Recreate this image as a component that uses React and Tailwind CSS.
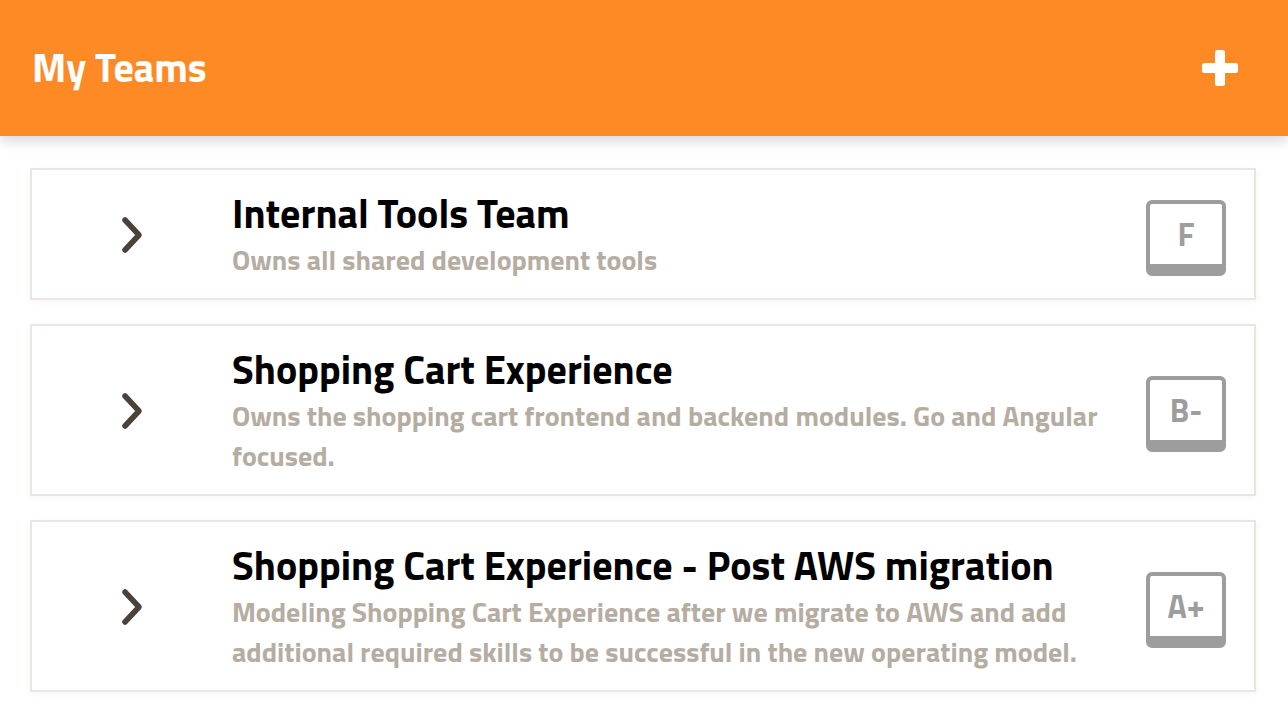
const teams = [
  {
    name: 'Internal Tools Team',
    lines: ['Owns all shared development tools'],
    grade: 'F',
  },
  {
    name: 'Shopping Cart Experience',
    lines: ['Owns the shopping cart frontend and backend modules. Go and Angular', 'focused.'],
    grade: 'B-',
  },
  {
    name: 'Shopping Cart Experience - Post AWS migration',
    lines: [
      'Modeling Shopping Cart Experience after we migrate to AWS and add',
      'additional required skills to be successful in the new operating model.',
    ],
    grade: 'A+',
  },
];

function Chevron() {
  return (
    <svg width="24" height="40" viewBox="0 0 24 40" fill="none" className="mt-[2px]">
      <path d="M5 5L19 20L5 35" stroke="#4a4238" strokeWidth="5.5" strokeLinecap="round" strokeLinejoin="round" />
    </svg>
  );
}

function Grade({ grade }) {
  return (
    <div className="w-[80px] h-[76px] flex-shrink-0 rounded-[6px] border-4 border-b-[12px] border-[#9d9d9d] bg-white flex items-center justify-center">
      <span className="text-[32px] font-bold text-[#9d9d9d] leading-none">{grade}</span>
    </div>
  );
}

function TeamCard({ team }) {
  return (
    <div className="flex items-center border-2 border-[#ebe7e0] bg-white shadow-[0_2px_6px_rgba(0,0,0,0.04)]">
      <div className="w-[200px] flex-shrink-0 flex justify-center">
        <Chevron />
      </div>
      <div className="flex-1 pt-[20px] pb-[18px]">
        <div className="text-[40px] leading-[48px] font-bold text-black">{team.name}</div>
        <div className="mt-[2px] text-[28px] leading-[40px] font-bold text-[#b5ada2]">
          {team.lines.map((l, i) => (
            <div key={i}>{l}</div>
          ))}
        </div>
      </div>
      <div className="pr-[28px] pl-4 pt-[8px]">
        <Grade grade={team.grade} />
      </div>
    </div>
  );
}

export default function App() {
  return (
    <div className="w-[1288px] h-[726px] bg-white overflow-hidden" style={{ fontFamily: "'Titillium Web', Lato, 'Open Sans', sans-serif" }}>
      <div className="h-[136px] bg-[#fe8a25] flex items-center justify-between pl-[32px] pr-[50px] shadow-[0_4px_14px_rgba(0,0,0,0.18)] relative z-10">
        <h1 className="text-[40px] font-bold text-white">My Teams</h1>
        <svg width="36" height="36" viewBox="0 0 36 36">
          <rect x="13" y="0" width="10" height="36" rx="2.5" fill="white" />
          <rect x="0" y="13" width="36" height="10" rx="2.5" fill="white" />
        </svg>
      </div>
      <div className="pl-[30px] pr-[32px] pt-[32px] flex flex-col gap-[24px]">
        {teams.map((t) => (
          <TeamCard key={t.grade} team={t} />
        ))}
      </div>
    </div>
  );
}
